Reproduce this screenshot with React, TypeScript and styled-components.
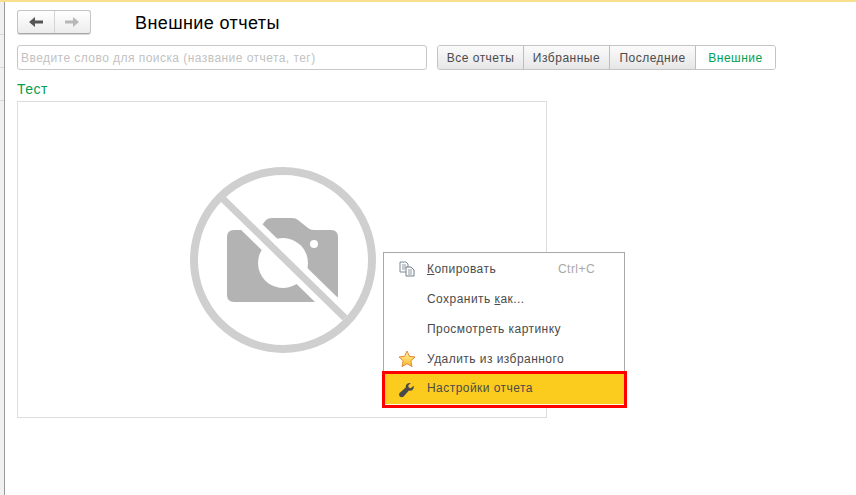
import React from "react";
import styled, { createGlobalStyle } from "styled-components";

const GlobalStyle = createGlobalStyle`
  html, body {
    margin: 0;
    padding: 0;
    background: #fff;
    overflow: hidden;
  }
  body {
    font-family: "Liberation Sans", Arial, sans-serif;
    font-size: 12px;
    color: #4b4b4b;
  }
`;

const Page = styled.div`
  width: 856px;
  height: 495px;
  display: flex;
  flex-direction: column;
`;

const TopLine = styled.div`
  height: 2px;
  flex: none;
  background: #f6e08c;
`;

const Body = styled.div`
  flex: 1;
  display: flex;
  min-height: 0;
`;

const SideStrip = styled.div`
  width: 4px;
  flex: none;
  background: #f0f0f0;
  border-right: 1px solid #9a9a9a;
  display: flex;
  flex-direction: column;
`;

const SideTab = styled.div`
  height: 32px;
  flex: none;
  border-bottom: 1px solid #d8d8d8;
`;

const Main = styled.div`
  flex: 1;
  padding: 8px 0 0 12px;
  display: flex;
  flex-direction: column;
  align-items: flex-start;
`;

const Header = styled.div`
  display: flex;
  align-items: center;
  height: 24px;
`;

const NavGroup = styled.div`
  display: flex;
  width: 74px;
  height: 24px;
  box-sizing: border-box;
  border: 1px solid #c4c4c4;
  border-bottom-color: #a8a8a8;
  border-radius: 3px;
  background: linear-gradient(#ffffff, #ececec);
  box-shadow: 0 1px 0 #d8d8d8;
`;

const NavButton = styled.div<{ $divider?: boolean }>`
  flex: 1;
  display: flex;
  align-items: center;
  justify-content: center;
  border-left: ${(p) => (p.$divider ? "1px solid #d4d4d4" : "none")};
`;

const Title = styled.div`
  margin: 3px 0 0 44px;
  font-size: 18px;
  letter-spacing: 0.4px;
  color: #000;
`;

const FilterRow = styled.div`
  display: flex;
  margin-top: 11px;
  gap: 10px;
`;

const SearchBox = styled.div`
  width: 410px;
  height: 25px;
  box-sizing: border-box;
  border: 1px solid #c8c8c8;
  border-radius: 3px;
  padding-left: 3px;
  display: flex;
  align-items: center;
  color: #c2c2c2;
  letter-spacing: 0.45px;
`;

const TabGroup = styled.div`
  display: flex;
  height: 25px;
  box-sizing: border-box;
  border: 1px solid #c4c4c4;
  border-radius: 3px;
  overflow: hidden;
`;

const Tab = styled.div<{ $active?: boolean; $w: number }>`
  width: ${(p) => p.$w}px;
  box-sizing: border-box;
  display: flex;
  align-items: center;
  justify-content: center;
  letter-spacing: 0.5px;
  color: ${(p) => (p.$active ? "#00a04f" : "#4b4b4b")};
  background: ${(p) => (p.$active ? "#fff" : "linear-gradient(#fbfbfb, #e6e6e6)")};
  & + & {
    border-left: 1px solid #bdbdbd;
  }
`;

const GroupLabel = styled.div`
  margin-top: 11px;
  font-size: 14px;
  line-height: 16px;
  letter-spacing: 0.5px;
  color: #00a04f;
`;

const PictureFrame = styled.div`
  position: relative;
  margin-top: 4px;
  width: 530px;
  height: 317px;
  box-sizing: border-box;
  border: 1px solid #dcdcdc;
  display: flex;
  align-items: center;
  justify-content: center;
`;

const Menu = styled.div`
  position: absolute;
  left: 365px;
  top: 150px;
  width: 242px;
  box-sizing: border-box;
  border: 1px solid #a8a8a8;
  background: #fff;
  padding-top: 1px;
`;

const MenuItem = styled.div<{ $selected?: boolean }>`
  position: relative;
  height: 30px;
  display: flex;
  align-items: center;
  padding-left: 43px;
  letter-spacing: 0.45px;
  ${(p) =>
    p.$selected &&
    `
    box-sizing: border-box;
    background: #fbcb1d;
    outline: 3px solid #f00;
    outline-offset: -1px;
    box-shadow: inset 0 -2px 0 #fff8dc;
    margin: -1px -1px -1px 0;
    height: 33px;
    padding-bottom: 3px;
  `}
`;

const MenuIcon = styled.span<{ $left?: number }>`
  position: absolute;
  left: ${(p) => p.$left ?? 14}px;
  top: 50%;
  transform: translateY(-50%);
  display: flex;
`;

const Shortcut = styled.span`
  position: absolute;
  left: 174px;
  color: #a8a8a8;
`;

const Hotkey = styled.span`
  text-decoration: underline;
`;

function ArrowIcon({ dir, color }: { dir: "left" | "right"; color: string }) {
  return (
    <svg width="16" height="12" viewBox="0 0 16 12">
      <path
        d={dir === "left" ? "M1 6 L7 1 V4.5 H15 V7.5 H7 V11 Z" : "M15 6 L9 1 V4.5 H1 V7.5 H9 V11 Z"}
        fill={color}
      />
    </svg>
  );
}

function NoPhoto() {
  return (
    <svg width="188" height="188" viewBox="0 0 188 188">
      <path
        d="M46 64 H70 L78 54 Q80 52 84 52 H104 Q108 52 110 54 L120 62 Q122 64 126 64 H143 Q150 64 150 71 V129 Q150 136 143 136 H46 Q39 136 39 129 V71 Q39 64 46 64 Z"
        fill="#b3b3b3"
      />
      <circle cx="95" cy="97" r="25" fill="#fff" />
      <circle cx="126" cy="78" r="4" fill="#fff" />
      <line x1="34" y1="32" x2="157" y2="152" stroke="#fff" strokeWidth="19" />
      <circle cx="95" cy="94" r="89" fill="none" stroke="#cfcfcf" strokeWidth="8" />
      <line x1="34" y1="32" x2="157" y2="152" stroke="#cfcfcf" strokeWidth="7" />
    </svg>
  );
}

function CopyIcon() {
  return (
    <svg width="16" height="16" viewBox="0 0 16 16">
      <path d="M1 1 H7 L9 3 V11 H1 Z" fill="#fff" stroke="#7d8a96" />
      <path d="M3 4 H7 M3 6 H7 M3 8 H6" stroke="#8f9aa5" />
      <path d="M7 6 H12 L15 9 V15 H7 Z" fill="#fff" stroke="#6f7c88" />
      <path d="M9 9 H13 M9 11 H13 M9 13 H13" stroke="#8f9aa5" />
    </svg>
  );
}

function StarIcon() {
  return (
    <svg width="18" height="18" viewBox="0 0 18 18">
      <defs>
        <linearGradient id="star" x1="0" y1="0" x2="0" y2="1">
          <stop offset="0" stopColor="#fff3a0" />
          <stop offset="1" stopColor="#fdb92a" />
        </linearGradient>
      </defs>
      <path
        d="M9 1 L11.4 6.3 L17 7 L12.8 10.8 L14 16.6 L9 13.7 L4 16.6 L5.2 10.8 L1 7 L6.6 6.3 Z"
        fill="url(#star)"
        stroke="#e08a3c"
        strokeLinejoin="round"
      />
    </svg>
  );
}

function WrenchIcon() {
  return (
    <svg width="15" height="15" viewBox="0 0 16 16">
      <path
        d="M15.6 3.4 L12.6 6 L10.4 5.4 L9.8 3.2 L12.6 0.6 C9.6 -0.2 6.8 2 7.2 5.2 L0.9 10.9 C-0.3 12 -0.1 13.9 0.8 14.9 C1.9 16 3.7 16.1 4.9 14.9 L10.6 8.6 C13.8 9.4 16.6 6.6 15.6 3.4 Z"
        fill="#4a4a4a"
      />
    </svg>
  );
}

export default function App() {
  return (
    <Page>
      <GlobalStyle />
      <TopLine />
      <Body>
        <SideStrip>
          <SideTab />
          <SideTab />
          <SideTab />
        </SideStrip>
        <Main>
          <Header>
            <NavGroup>
              <NavButton>
                <ArrowIcon dir="left" color="#555" />
              </NavButton>
              <NavButton $divider>
                <ArrowIcon dir="right" color="#b8b8b8" />
              </NavButton>
            </NavGroup>
            <Title>Внешние отчеты</Title>
          </Header>
          <FilterRow>
            <SearchBox>Введите слово для поиска (название отчета, тег)</SearchBox>
            <TabGroup>
              <Tab $w={85}>Все отчеты</Tab>
              <Tab $w={86}>Избранные</Tab>
              <Tab $w={86}>Последние</Tab>
              <Tab $w={80} $active>
                Внешние
              </Tab>
            </TabGroup>
          </FilterRow>
          <GroupLabel>Тест</GroupLabel>
          <PictureFrame>
            <NoPhoto />
            <Menu>
              <MenuItem>
                <MenuIcon $left={15}>
                  <CopyIcon />
                </MenuIcon>
                <span>
                  <Hotkey>К</Hotkey>опировать
                </span>
                <Shortcut>Ctrl+C</Shortcut>
              </MenuItem>
              <MenuItem>
                <span>
                  Сохранить <Hotkey>к</Hotkey>ак...
                </span>
              </MenuItem>
              <MenuItem>Просмотреть картинку</MenuItem>
              <MenuItem>
                <MenuIcon>
                  <StarIcon />
                </MenuIcon>
                Удалить из избранного
              </MenuItem>
              <MenuItem $selected>
                <MenuIcon $left={15}>
                  <WrenchIcon />
                </MenuIcon>
                Настройки отчета
              </MenuItem>
            </Menu>
          </PictureFrame>
        </Main>
      </Body>
    </Page>
  );
}
